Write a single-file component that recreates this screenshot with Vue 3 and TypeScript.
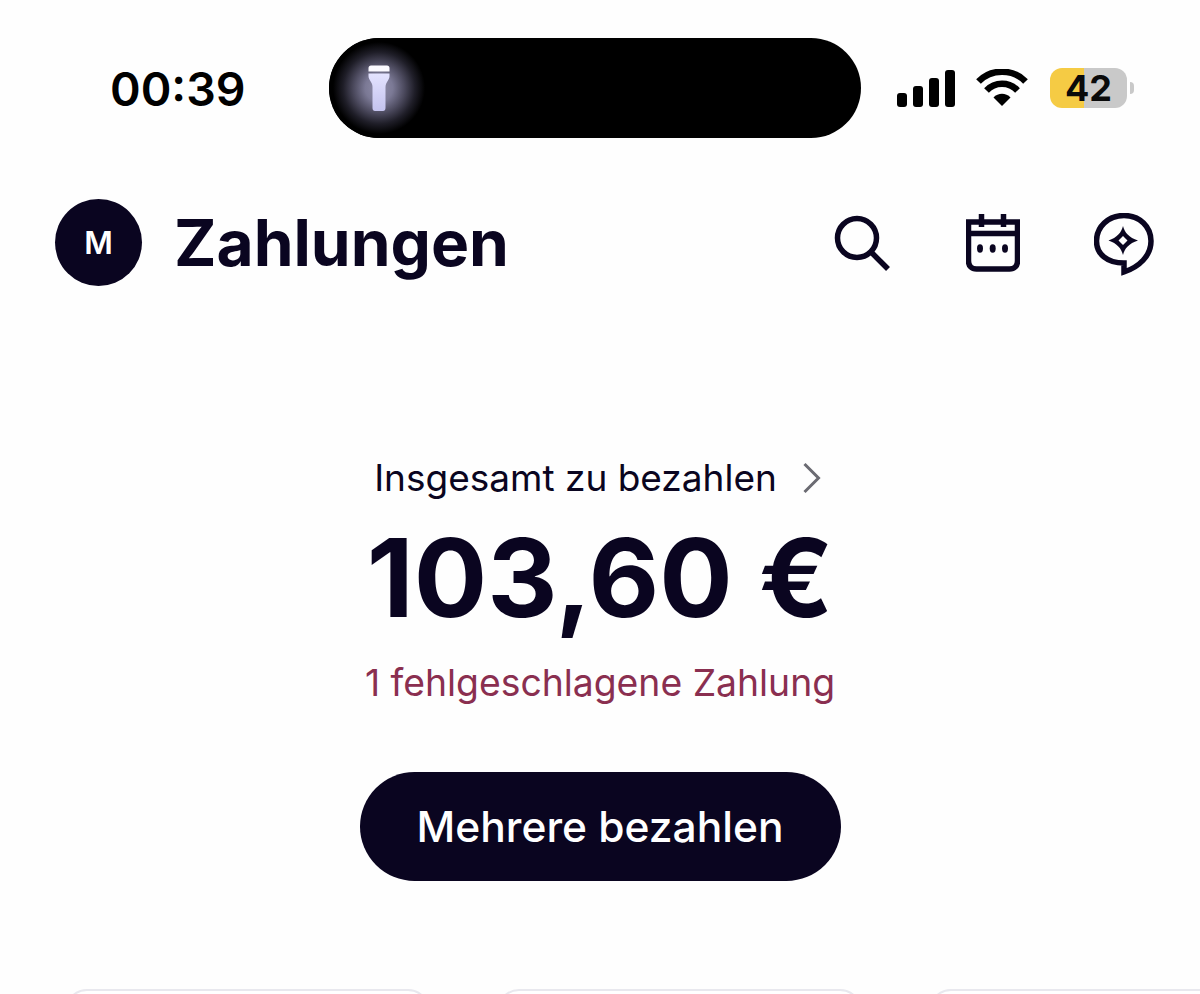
<script setup lang="ts">
const bars: number[] = [14, 21, 29, 37]
</script>

<template>
  <div class="screen">
    <div class="status">
      <span class="time">00:39</span>
      <div class="island">
        <div class="glow">
          <svg width="22" height="46" viewBox="0 0 22 46">
            <defs>
              <linearGradient id="torch" x1="0" y1="0" x2="0" y2="1">
                <stop offset="0" stop-color="#e4e3ff" />
                <stop offset="1" stop-color="#c4c3ee" />
              </linearGradient>
            </defs>
            <path d="M0.500 3C0.500 1.500 1.500 0.500 3 0.500H19C20.500 0.500 21.500 1.500 21.500 3V6.500H0.500Z" fill="#fbfaff" />
            <path d="M0.500 8.500H21.500V11C21.500 15 17.500 17 17.500 22V43C17.500 45 16.500 46 15 46H7C5.500 46 4.500 45 4.500 43V22C4.500 17 0.500 15 0.500 11Z" fill="url(#torch)" />
          </svg>
        </div>
      </div>
      <div class="indicators">
        <div class="signal">
          <i v-for="h in bars" :key="h" :style="{ height: h + 'px' }"></i>
        </div>
        <svg class="wifi" width="54" height="38" viewBox="0 0 54 38">
          <path d="M27 37 L18.500 28.500 C23 23.500 31 23.500 35.500 28.500Z" fill="#000" />
          <path d="M11.500 21.500 C20 12.500 34 12.500 42.500 21.500" fill="none" stroke="#000" stroke-width="6.500" />
          <path d="M3.500 12.500 C16 -0.500 38 -0.500 50.500 12.500" fill="none" stroke="#000" stroke-width="6.500" />
        </svg>
        <div class="battery"><span>42</span></div>
        <div class="nub"></div>
      </div>
    </div>

    <header class="head">
      <div class="avatar">M</div>
      <h1>Zahlungen</h1>
      <div class="tools">
        <svg width="58" height="58" viewBox="0 0 58 58" fill="none" stroke="#0a0520" stroke-width="5.500">
          <circle cx="23" cy="24" r="19.500" />
          <path d="M37 38 L54 55" />
        </svg>
        <svg width="54" height="58" viewBox="0 0 54 58" fill="none" stroke="#0a0520" stroke-width="5.500">
          <path d="M2.500 8H51.500V47C51.500 52 48.500 55 43.500 55H10.500C5.500 55 2.500 52 2.500 47Z" />
          <path d="M2.500 19.500H51.500" />
          <path d="M15.500 0V13M37.500 0V13" />
          <g fill="#0a0520" stroke="none">
            <ellipse cx="14" cy="34.500" rx="3" ry="4.200" />
            <ellipse cx="26.700" cy="34.500" rx="3" ry="4.200" />
            <ellipse cx="39" cy="34.500" rx="3" ry="4.200" />
          </g>
        </svg>
        <svg class="chat" width="60" height="63" viewBox="0 0 60 63" fill="none" stroke="#0a0520" stroke-width="5.500">
          <path d="M30 2.500C14 2.500 2.500 14 2.500 28C2.500 41 13 50 30 50V59C45 54 57 43 57 28C57 14 46 2.500 30 2.500Z" />
          <path fill="#0a0520" stroke="none" fill-rule="evenodd" d="M29 13C30.500 19.500 35 24.500 44 27.500C35 30.500 30.500 35.500 29 42C27.500 35.500 23 30.500 14.500 27.500C23 24.500 27.500 19.500 29 13ZM29 23L24.500 27.500L29 32L33.500 27.500Z" />
        </svg>
      </div>
    </header>

    <section class="summary">
      <div class="label">
        <span>Insgesamt zu bezahlen</span>
        <svg width="18" height="32" viewBox="0 0 18 32" fill="none" stroke="#6b6b72" stroke-width="3">
          <path d="M1.500 2 L15.500 16 L1.500 30" />
        </svg>
      </div>
      <div class="amount">103,60 €</div>
      <div class="failed">1 fehlgeschlagene Zahlung</div>
      <button class="pay" type="button">Mehrere bezahlen</button>
    </section>

    <div class="cards">
      <div class="card"></div>
      <div class="card"></div>
      <div class="card"></div>
    </div>
  </div>
</template>

<style>
html, body { margin: 0; background: #fefefe; overflow: hidden; }
</style>

<style scoped>
.screen {
  width: 1200px;
  height: 994px;
  overflow: hidden;
  background: #fefefe;
  color: #0a0520;
  font-family: Inter, "Liberation Sans", sans-serif;
  display: flex;
  flex-direction: column;
}
.status {
  display: flex;
  align-items: center;
  height: 100px;
  margin-top: 38px;
  padding-left: 110px;
}
.time {
  width: 219px;
  padding-top: 2px;
  font-size: 46.500px;
  font-weight: 600;
  color: #000;
  line-height: 1;
}
.island {
  width: 532px;
  height: 100px;
  border-radius: 50px;
  background: #000;
  display: flex;
  align-items: center;
  overflow: hidden;
}
.glow {
  width: 100px;
  height: 100px;
  display: flex;
  align-items: center;
  justify-content: center;
  background: radial-gradient(circle 46px at 50% 50%, #8f8da8 0, #7b7995 30%, #4c4a5e 55%, #1f1e28 78%, #000 100%);
}
.indicators {
  display: flex;
  align-items: center;
  margin-left: 36px;
}
.signal {
  display: flex;
  align-items: flex-end;
  gap: 6px;
  height: 37px;
}
.signal i {
  width: 10px;
  border-radius: 3px;
  background: #000;
}
.wifi { margin-left: 20px; }
.battery {
  margin-left: 21px;
  width: 77px;
  height: 40px;
  border-radius: 12px;
  background: linear-gradient(to right, #f5cb44 0, #f5cb44 34px, #c9c9c9 34px);
  display: flex;
  align-items: center;
  justify-content: center;
}
.battery span {
  font-size: 36px;
  font-weight: 700;
  color: #0a0a0a;
  line-height: 1;
}
.nub {
  width: 4px;
  height: 12px;
  margin-left: 3px;
  border-radius: 0 6px 6px 0;
  background: #c9c9c9;
}
.head {
  display: flex;
  align-items: center;
  margin-top: 61px;
  padding-left: 55px;
  height: 87px;
}
.avatar {
  width: 87px;
  height: 87px;
  border-radius: 50%;
  background: #0a0520;
  color: #fff;
  font-size: 31px;
  font-weight: 600;
  display: flex;
  align-items: center;
  justify-content: center;
}
h1 {
  margin: 0 0 0 32px;
  font-size: 64px;
  font-weight: 700;
  line-height: 1;
  width: 660px;
}
.tools {
  display: flex;
  align-items: center;
  gap: 74px;
}
.chat { margin-top: 4px; }
.summary {
  display: flex;
  flex-direction: column;
  align-items: center;
  margin-top: 171px;
}
.label {
  display: flex;
  align-items: center;
  gap: 26px;
  font-size: 37px;
  line-height: 42px;
}
.label svg { margin-right: 5px; }
.amount {
  margin-top: 18px;
  font-size: 109px;
  font-weight: 700;
  line-height: 120px;
}
.failed {
  margin-top: 24px;
  font-size: 37.300px;
  line-height: 44px;
  color: #8a2f50;
}
.pay {
  margin-top: 67px;
  width: 481px;
  height: 109px;
  border: none;
  border-radius: 55px;
  background: #0a0520;
  color: #fff;
  font-family: inherit;
  font-size: 42.500px;
  font-weight: 500;
}
.cards {
  display: flex;
  gap: 67px;
  padding-left: 65px;
  margin-top: 108px;
}
.card {
  flex: 0 0 365px;
  height: 120px;
  box-sizing: border-box;
  border: 2px solid #e8e8ee;
  border-radius: 22px;
  background: #fff;
}
</style>
